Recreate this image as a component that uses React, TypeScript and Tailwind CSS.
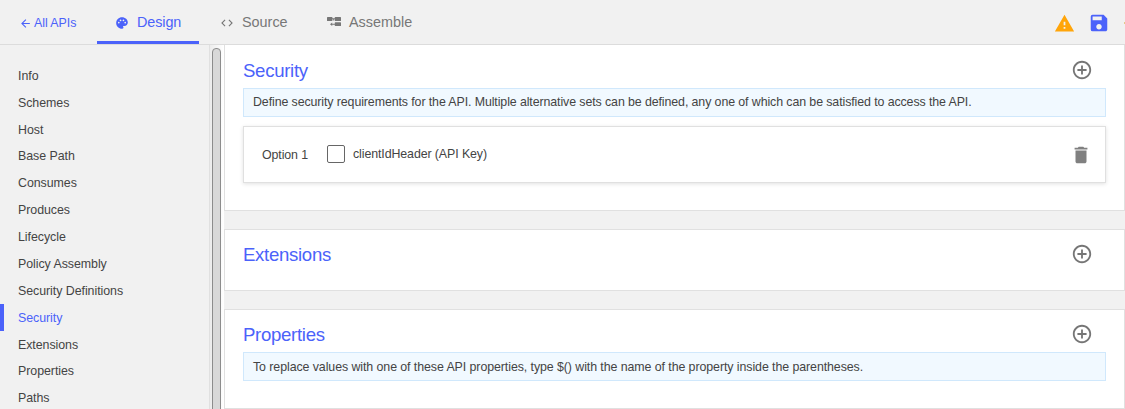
import React from "react";
import { MdAddCircleOutline, MdArrowBack, MdCode, MdDelete, MdPalette, MdSave, MdWarning } from "react-icons/md";

const navItems: { label: string; size: string }[] = [
  { label: "Info", size: "h-[27px] pt-[2px]" },
  { label: "Schemes", size: "h-[27px] pt-[2px]" },
  { label: "Host", size: "h-[27px] pt-[2px]" },
  { label: "Base Path", size: "h-[26px] pt-px" },
  { label: "Consumes", size: "h-[27px] pt-[2px]" },
  { label: "Produces", size: "h-[27px] pt-[2px]" },
  { label: "Lifecycle", size: "h-[27px] pt-[2px]" },
  { label: "Policy Assembly", size: "h-[27px] pt-[2px]" },
  { label: "Security Definitions", size: "h-[27px] pt-[2px]" },
  { label: "Security", size: "h-[27px] pt-[2px]" },
  { label: "Extensions", size: "h-[27px] pt-[2px]" },
  { label: "Properties", size: "h-[26px] pt-px" },
  { label: "Paths", size: "h-[27px] pt-[2px]" },
];

function AssembleIcon() {
  return (
    <svg width="14" height="10" viewBox="0 0 14 10" fill="currentColor" className="shrink-0">
      <rect x="0" y="0" width="5.4" height="3.9" rx="0.5" />
      <rect x="7.8" y="0" width="6.2" height="3.9" rx="0.5" />
      <rect x="7.8" y="5.2" width="6.2" height="3.9" rx="0.5" />
      <path d="M5 1.3h3.2v1H5zM6.2 2h1v1.6h-1zM3 7.3l2.2-1.8v1.3H8v1H5.2v1.3z" />
    </svg>
  );
}

function SectionTitle({ children }: { children: string }) {
  return (
    <div className="flex h-[22px] items-start justify-between pr-[13px]">
      <h2 className="pt-px text-[18.6px] leading-[22px] tracking-[-0.3px] text-[#4b62fa]">{children}</h2>
      <MdAddCircleOutline className="size-[22px] text-[#767676]" />
    </div>
  );
}

function InfoBox({ children, className }: { children: string; className: string }) {
  return (
    <p className={`h-[29px] border border-[#d0e8fc] bg-[#f1f9ff] pl-[9px] text-[12.4px] ${className}`}>
      {children}
    </p>
  );
}

export default function App() {
  return (
    <div className="flex h-[409px] w-[1125px] flex-col overflow-hidden bg-[#f1f1f1] font-['Liberation_Sans',Arial,sans-serif] text-[#444]">
      <header className="flex h-[45px] shrink-0 border-b border-[#dcdcdc] text-[14.4px] text-[#777]">
        <a className="flex w-[97px] items-center pl-[19px] pt-px text-[12.4px] text-[#4b62fa]">
          <MdArrowBack className="mr-[2px] mt-px size-[13px]" />
          <span className="pt-[2px] tracking-[-0.05px]">All APIs</span>
        </a>
        <nav className="flex">
          <a className="flex w-[102px] items-center border-b-3 border-[#4b62fa] pl-[18px] pt-[3px] text-[#4b62fa]">
            <MdPalette className="mr-[8px] mt-[2px] size-[14px]" />
            <span className="pt-[2px] tracking-[-0.1px]">Design</span>
          </a>
          <a className="flex w-[108px] items-center pl-[21px]">
            <MdCode className="mr-[8px] mt-[2px] size-[14px]" />
            <span className="pt-[2px]">Source</span>
          </a>
          <a className="flex items-center pl-[20px]">
            <AssembleIcon />
            <span className="ml-[8px] pt-[2px]">Assemble</span>
          </a>
        </nav>
        <div className="ml-auto flex items-center">
          <MdWarning className="mr-[13px] mt-[2px] size-[21px] text-[#ffa50a]" />
          <MdSave className="mr-[14px] mt-[2px] size-[22px] text-[#4b62fa]" />
          <span className="mt-[2px] h-[2px] w-px bg-[#e5c98a]" />
        </div>
      </header>

      <div className="flex min-h-0 flex-1">
        <aside className="w-[209px] shrink-0 pt-[17px] text-[12.4px]">
          {navItems.map(({ label, size }) => (
            <a
              key={label}
              className={`flex items-center border-l-4 pl-[14px] tracking-[-0.05px] ${size} ${
                label === "Security" ? "border-[#4b62fa] text-[#4b62fa]" : "border-transparent"
              }`}
            >
              {label}
            </a>
          ))}
        </aside>
        <div className="w-[15px] shrink-0 border-l border-[#e0e0e0] bg-gradient-to-r from-[#ececec] to-white pl-[2px] pt-[3px]">
          <div className="h-[400px] w-[9px] rounded-t-[4px] border border-[#8c8c8c] bg-[#d8d8d8]" />
        </div>

        <main className="flex w-[901px] shrink-0 flex-col gap-[18px]">
          <section className="h-[166px] shrink-0 border border-t-0 border-[#e0e0e0] bg-white px-[18px] pt-[14px]">
            <SectionTitle>Security</SectionTitle>
            <div className="pt-[7px]">
              <InfoBox className="leading-[26px] tracking-[-0.1px]">
                Define security requirements for the API. Multiple alternative sets can be defined, any one of which can be satisfied to access the API.
              </InfoBox>
            </div>
            <div className="mt-[9px] flex h-[57px] items-center border border-[#e0e0e0] pl-[18px] pr-[13px] text-[12.4px] tracking-[-0.1px] shadow-[0_1px_4px_rgba(0,0,0,0.12)]">
              <span className="w-[65px] pt-[2px]">Option 1</span>
              <label className="flex items-center">
                <span className="mr-[8px] size-[18px] rounded-[2px] border border-[#666] bg-white" />
                <span>clientIdHeader (API Key)</span>
              </label>
              <MdDelete className="ml-auto size-[22px] text-[#808080]" />
            </div>
          </section>

          <section className="h-[62px] shrink-0 border border-[#e0e0e0] bg-white px-[18px] pt-[13px]">
            <SectionTitle>Extensions</SectionTitle>
          </section>

          <section className="h-[100px] shrink-0 border border-[#e0e0e0] bg-white px-[18px] pt-[13px]">
            <SectionTitle>Properties</SectionTitle>
            <div className="pt-[7px]">
              <InfoBox className="leading-[28px] tracking-[-0.08px]">
                To replace values with one of these API properties, type $() with the name of the property inside the parentheses.
              </InfoBox>
            </div>
          </section>
        </main>
      </div>
    </div>
  );
}
